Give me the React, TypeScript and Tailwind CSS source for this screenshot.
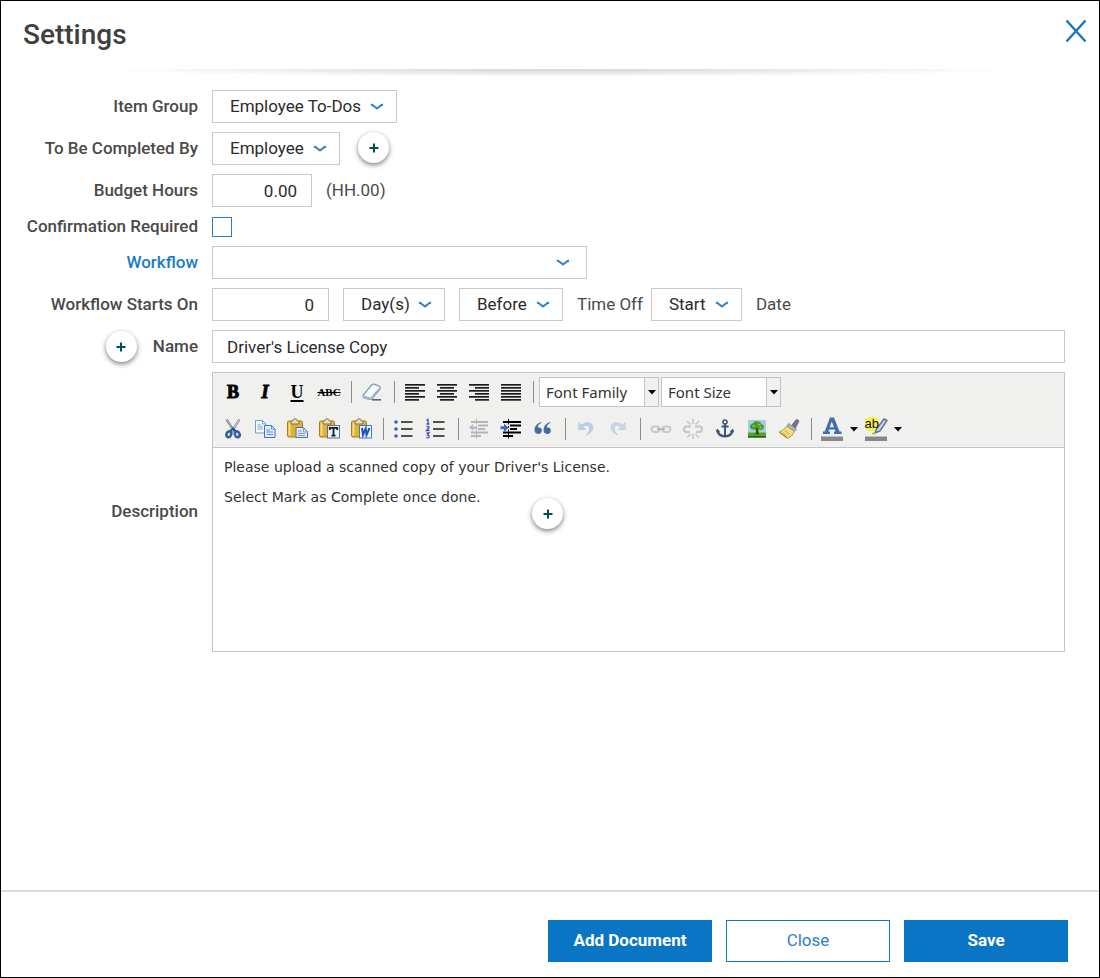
import { useState, type ReactNode } from "react";

const fieldBox =
  "h-[33px] border border-[#c9c9c9] bg-white text-[17px] text-[#2b2b2b] outline-none focus:border-[#0b75c5]";

function Chevron() {
  return (
    <svg viewBox="0 0 14 8" className="h-2 w-3.5" fill="none" stroke="#2f80c4" strokeWidth="2" aria-hidden="true">
      <path d="M1 1.500L2.800 2.200L7 5.500L11.200 2.200L13 1.500" strokeLinejoin="round" />
    </svg>
  );
}

function SelectBox({
  id,
  label,
  options,
  width,
  arrow = "right-[13px]",
}: {
  id: string;
  label?: string;
  options: string[];
  width: string;
  arrow?: string;
}) {
  return (
    <div className={`relative ${width}`}>
      <select id={id} aria-label={label} className={`${fieldBox} block w-full appearance-none pr-8 pl-[17px]`}>
        {options.map((option) => (
          <option key={option}>{option}</option>
        ))}
      </select>
      <span className={`pointer-events-none absolute inset-y-0 flex items-center ${arrow}`}>
        <Chevron />
      </span>
    </div>
  );
}

function Hotspot({ label, className = "" }: { label: string; className?: string }) {
  return (
    <button
      type="button"
      aria-label={label}
      className={`flex size-[31px] shrink-0 items-center justify-center rounded-full bg-white shadow-[0_2px_5px_rgba(0,0,0,0.5)] ${className}`}
    >
      <svg viewBox="0 0 10 10" className="size-2.5" stroke="#00504f" strokeWidth="2" aria-hidden="true">
        <path d="M5 0.500V9.500M0.500 5H9.500" />
      </svg>
    </button>
  );
}

function Row({
  id,
  label,
  children,
  height = "min-h-[33px]",
  accent = false,
  before,
}: {
  id: string;
  label: string;
  children: ReactNode;
  height?: string;
  accent?: boolean;
  before?: ReactNode;
}) {
  return (
    <div className={`flex items-center gap-3.5 ${height}`}>
      <div className="flex w-[197px] shrink-0 items-center justify-end gap-4">
        {before}
        <label
          htmlFor={id}
          className={`text-right text-[17px] font-medium ${accent ? "text-[#1a7cc9]" : "text-[#4a4a4a]"}`}
        >
          {label}
        </label>
      </div>
      <div className="flex min-w-0 flex-1 items-center">{children}</div>
    </div>
  );
}

function Icon({ children }: { children: ReactNode }) {
  return (
    <svg viewBox="0 0 22 22" className="size-[22px]" fill="none" aria-hidden="true">
      {children}
    </svg>
  );
}

function Tool({ label, children, disabled = false }: { label: string; children: ReactNode; disabled?: boolean }) {
  return (
    <button
      type="button"
      aria-label={label}
      title={label}
      disabled={disabled}
      className="flex h-7 w-8 shrink-0 items-center justify-center text-black enabled:hover:bg-[#dfe6ee]"
    >
      {children}
    </button>
  );
}

function Separator() {
  return (
    <span className="flex h-[22px] w-[11px] shrink-0 justify-end pr-1" aria-hidden="true">
      <span className="w-px bg-[#8c8c8c]" />
    </span>
  );
}

function Caret() {
  return (
    <svg viewBox="0 0 8 5" className="h-[5px] w-2" aria-hidden="true">
      <path d="M0 0H8L4 4.500Z" fill="#000" />
    </svg>
  );
}

function FontSelect({ label, width }: { label: string; width: string }) {
  return (
    <div className={`relative ${width}`}>
      <select
        aria-label={label}
        className="block h-[30px] w-full appearance-none border border-[#c4c4c4] bg-white pr-4 pl-1.5 font-['Noto_Sans',sans-serif] text-[15px] text-[#333] outline-none"
      >
        <option>{label}</option>
      </select>
      <span className="pointer-events-none absolute inset-y-px right-px flex w-3.5 items-center justify-center border-l border-[#c4c4c4] bg-[#f0f0ee]">
        <Caret />
      </span>
    </div>
  );
}

function AlignIcon({ rows }: { rows: [number, number][] }) {
  return (
    <Icon>
      {rows.map(([x, w], i) => (
        <rect key={i} x={x} y={3 + i * 3} width={w} height="1.700" fill="#1c1c1c" />
      ))}
    </Icon>
  );
}

function Clipboard({ children }: { children: ReactNode }) {
  return (
    <Icon>
      <rect x="1.500" y="3" width="15" height="16" rx="1.500" fill="#e3b030" stroke="#a87820" />
      <path d="M3.500 4.500V17.500" stroke="#f8de85" strokeWidth="2" />
      <path d="M5 6V4Q5 3 6.500 3Q7 0.800 9 0.800T11.500 3Q13 3 13 4V6Z" fill="#e9dfbb" stroke="#86703d" />
      {children}
    </Icon>
  );
}

const cut = (
  <Icon>
    <path d="M4 2L5.500 1.500L13 13L11.500 14Z" fill="#a7b0bb" stroke="#7b8794" strokeWidth=".8" />
    <path d="M18 2L16.500 1.500L9 13L10.500 14Z" fill="#cbd1d8" stroke="#7b8794" strokeWidth=".8" />
    <ellipse cx="6.800" cy="16.300" rx="2.300" ry="3" transform="rotate(25 6.800 16.300)" stroke="#35609f" strokeWidth="2.600" />
    <ellipse cx="15.200" cy="16.300" rx="2.300" ry="3" transform="rotate(-25 15.200 16.300)" stroke="#35609f" strokeWidth="2.600" />
    <path d="M8 13.500L11 10.500L14 13.500" stroke="#33558e" strokeWidth="2.200" />
  </Icon>
);

const copy = (
  <Icon>
    <path d="M1.500 2.500H8.500L12 6V15H1.500Z" fill="#f5f9ff" stroke="#7c9bd0" />
    <path d="M8.500 2.500V6H12M3.500 7H7M3.500 9H9M3.500 11H9" stroke="#7fa5e0" />
    <path d="M10.500 7.500H17.500L21 11V19.500H10.500Z" fill="#dfebff" stroke="#4472bd" />
    <path d="M17.500 7.500V11H21M12.500 12H16M12.500 14H19M12.500 16.500H19" stroke="#5f92df" />
  </Icon>
);

const paste = (
  <Clipboard>
    <path d="M10 9.500H17.500L21.500 14V19.500H10Z" fill="#dce8fa" stroke="#54729f" />
    <path d="M17.500 9.500V14H21.500M12 13H15.500M12 15.500H19M12 17.500H19" stroke="#7fa2d4" />
  </Clipboard>
);

const pasteText = (
  <Clipboard>
    <rect x="9.500" y="7.500" width="12" height="12.500" fill="#eef2f8" stroke="#5f7188" />
    <path d="M11.800 12V9.800H19.200V12M15.500 9.800V17.500M13.500 17.700H17.500" stroke="#151d2c" strokeWidth="1.800" />
  </Clipboard>
);

const pasteWord = (
  <Clipboard>
    <rect x="9.500" y="7.500" width="12" height="12.500" fill="#eaf2ff" stroke="#4c78bd" />
    <path d="M12 10L13 17L15.700 10.500L16.500 17L19.500 10" stroke="#1e57b0" strokeWidth="2" />
  </Clipboard>
);

const eraser = (
  <Icon>
    <path d="M2 14.500L10.500 4Q12 2.500 14 3.500L18 5Q20 6.500 18.500 8.500L11 17.500Q9.500 19 7.500 18L3 16.500Q1.500 15.800 2 14.500Z" fill="#f6f9fd" stroke="#8ba0b8" strokeWidth="1.400" />
    <path d="M2 14.500L9.500 17L18.500 7" stroke="#9db1c6" />
    <path d="M11 18.800H20" stroke="#4b5a6c" strokeWidth="1.500" />
  </Icon>
);

const bullets = (
  <Icon>
    <path d="M8 4H19.500M8 11H19.500M8 18H19.500" stroke="#1c1c1c" strokeWidth="1.700" />
    <g fill="#3e61b0">
      <circle cx="3" cy="4" r="1.800" />
      <circle cx="3" cy="11" r="1.800" />
      <circle cx="3" cy="18" r="1.800" />
    </g>
  </Icon>
);

const numbers = (
  <Icon>
    <path d="M8 4H19.500M8 11H19.500M8 18H19.500" stroke="#1c1c1c" strokeWidth="1.700" />
    <path
      d="M1.500 2.500L3 1.500V6M1.500 6H4.500M1.500 8.800Q4 7.500 4 9.500L1.500 12.500H4.500M1.500 15H4L2.500 17Q4.500 17 4 18.800Q3.500 20.500 1.300 19.500"
      stroke="#3e50b8"
      strokeWidth="1.300"
    />
  </Icon>
);

const outdent = (
  <Icon>
    <path d="M8.500 1V21" stroke="#b5b5b5" strokeDasharray="2 1.500" />
    <path d="M3 4H20M10 7.500H20M10 11H17M3 14.500H20M3 18H13" stroke="#b5b5b5" strokeWidth="1.800" />
    <path d="M1 9.500L5 6V8.500H9V11H5V13Z" fill="#b2bbd0" />
  </Icon>
);

const indent = (
  <Icon>
    <path d="M8.500 1V21" stroke="#000" strokeDasharray="2 1.500" />
    <path d="M3 4H21M10 7.500H21M10 11H17M3 14.500H21M3 18H13" stroke="#000" strokeWidth="2" />
    <path d="M8.500 9.800L4 5.500V8.300H0.500V11.300H4V14Z" fill="#3f68c6" />
  </Icon>
);

const quote = (
  <Icon>
    <path
      d="M9.500 5Q5.500 6.500 5.800 9.500Q9.800 8.800 9.800 12.700Q9.500 16 6 16Q2.500 15.500 2.500 11.500Q3 6 9 4ZM18.500 5Q14.500 6.500 14.800 9.500Q18.800 8.800 18.800 12.700Q18.500 16 15 16Q11.500 15.500 11.500 11.500Q12 6 18 4Z"
      fill="#466b9e"
    />
  </Icon>
);

const undo = (
  <Icon>
    <path d="M4 4.500L3.500 11.500H10.500L8 9.200Q12 5.500 14.500 9Q16 12.500 11.500 17Q18.500 14 18 8.500Q15.500 1.500 6.200 7Z" fill="#bfd0e4" stroke="#a9bfd8" strokeWidth=".6" />
  </Icon>
);

const redo = (
  <Icon>
    <path d="M18 4.500L18.500 11.500H11.500L14 9.200Q10 5.500 7.500 9Q6 12.500 10.500 17Q3.500 14 4 8.500Q6.500 1.500 15.800 7Z" fill="#c9d7e6" stroke="#b3c6d9" strokeWidth=".6" />
  </Icon>
);

const link = (
  <Icon>
    <rect x="1.500" y="8.500" width="8" height="5.500" rx="2.700" stroke="#c8c8c8" strokeWidth="1.800" />
    <rect x="12.500" y="8.500" width="8" height="5.500" rx="2.700" stroke="#c8c8c8" strokeWidth="1.800" />
    <path d="M7 11.200H15" stroke="#b8b8b8" strokeWidth="2" />
  </Icon>
);

const unlink = (
  <Icon>
    <path d="M9 8.500H4.500Q2 8.500 2 11.200T4.500 14H8M13 8.500H17.500Q20 8.500 20 11.200T17.500 14H14" stroke="#c6c6c6" strokeWidth="2" />
    <path d="M11 1V6M5 3L8.500 6.500M17 3L13.500 6.500M11 16V21M5 19.500L8.500 16M17 19.500L13.500 16" stroke="#c6c6c6" strokeWidth="1.500" />
  </Icon>
);

const anchor = (
  <Icon>
    <circle cx="11" cy="4" r="2" stroke="#3c5475" strokeWidth="1.600" />
    <path d="M11 6V19M7.500 8.500H14.500" stroke="#3c5475" strokeWidth="2" />
    <path d="M3.500 12.500Q4.500 18 11 18.500Q17.500 18 18.500 12.500" stroke="#3c5475" strokeWidth="2.200" />
    <path d="M1.800 14.500L3 10.500L6.300 13.500ZM20.200 14.500L19 10.500L15.700 13.500Z" fill="#3c5475" />
  </Icon>
);

const image = (
  <Icon>
    <rect x="2" y="2" width="18" height="17.500" fill="#a5cdea" />
    <rect x="2" y="14.500" width="18" height="5" fill="#54a32d" />
    <path d="M4 9Q3.500 6 7 5.500Q8 2.500 11.500 3.500Q15 3 15.500 6Q19 7 17.500 10.500Q16 13 13 11.500Q10 13.500 8 11.500Q4.500 12 4 9Z" fill="#4a9c28" />
    <path d="M10.500 10H12L13 16.500H9.500Z" fill="#3d4a16" />
    <path d="M6.500 8H9M12 6.500H14.500M13.500 9.500H15.500" stroke="#91c94a" strokeWidth="1.500" />
    <path d="M2 18.800H20" stroke="#295e17" strokeWidth="1.500" />
  </Icon>
);

const cleanup = (
  <Icon>
    <path d="M14 7L18 1.800Q20 1 21 3L17.500 10Z" fill="#776f9b" stroke="#565073" strokeWidth=".6" />
    <path d="M10.500 5.500L18.500 11L16.500 13.500L9 8Z" fill="#aab5c8" stroke="#6b7588" strokeWidth=".7" />
    <path d="M9 8L16.500 13.500Q14 19 9.500 20.500L1 14Q5.500 12.500 9 8Z" fill="#eedf7b" stroke="#a68d34" strokeWidth=".8" />
    <path d="M4 14.500L8.500 17.500M7 12.500L11.500 16" stroke="#c4ac48" />
    <path d="M1.500 14.500L9.500 20" stroke="#8f7628" />
  </Icon>
);

const textColor = (
  <svg viewBox="0 0 24 26" className="h-[26px] w-6" fill="none" aria-hidden="true">
    <path d="M10 1.500H14L19.500 15.500H21.500V18H14V15.500H15.500L14.800 13.500H8.900L8.200 15.500H10V18H3V15.500H4.800ZM11.800 5.500L9.700 11.200H14Z" fill="#416ca8" fillRule="evenodd" />
    <rect x="1" y="20.500" width="22" height="4.500" fill="#888" />
  </svg>
);

const highlight = (
  <svg viewBox="0 0 24 26" className="h-[26px] w-6" fill="none" aria-hidden="true">
    <rect x="1" y="1" width="14" height="14" rx="5" fill="#f4ef55" />
    <path d="M20 3L23 4.500L16 15L11 17L12.500 13Z" fill="#c7d5e8" stroke="#626d96" strokeWidth="1.400" />
    <path d="M8 17.500H12" stroke="#d4a321" strokeWidth="1.500" />
    <text x="0.500" y="12" fontSize="13" fontFamily="Liberation Sans, sans-serif" fill="#111">
      ab
    </text>
    <rect x="1" y="20.500" width="22" height="4.500" fill="#888" />
  </svg>
);

function Editor() {
  const [text, setText] = useState(
    "Please upload a scanned copy of your Driver's License.\n\nSelect Mark as Complete once done.",
  );
  return (
    <div className="relative flex min-w-0 flex-1 flex-col border border-[#c4c4c4] bg-white">
      <div className="flex flex-col gap-2 border-b border-[#c4c4c4] bg-[#f0f0ee] py-1 pl-1">
        <div className="flex flex-wrap items-center">
          <Tool label="Bold">
            <span className="font-['Liberation_Serif',serif] text-lg font-black [-webkit-text-stroke:1px_#000]">B</span>
          </Tool>
          <Tool label="Italic">
            <span className="font-['Liberation_Serif',serif] text-lg font-bold italic [-webkit-text-stroke:1px_#000]">I</span>
          </Tool>
          <Tool label="Underline">
            <span className="font-['Liberation_Serif',serif] text-lg font-bold underline decoration-2 underline-offset-2">U</span>
          </Tool>
          <Tool label="Strikethrough">
            <span className="font-['Liberation_Serif',serif] text-[11px] font-bold line-through">ABC</span>
          </Tool>
          <Separator />
          <Tool label="Remove formatting">{eraser}</Tool>
          <Separator />
          <Tool label="Align left">
            <AlignIcon rows={[[1, 20], [1, 14], [1, 20], [1, 14], [1, 20], [1, 14]]} />
          </Tool>
          <Tool label="Align center">
            <AlignIcon rows={[[1, 20], [4, 14], [1, 20], [4, 14], [1, 20], [4, 14]]} />
          </Tool>
          <Tool label="Align right">
            <AlignIcon rows={[[1, 20], [7, 14], [1, 20], [7, 14], [1, 20], [7, 14]]} />
          </Tool>
          <Tool label="Align full">
            <AlignIcon rows={[[1, 20], [1, 20], [1, 20], [1, 20], [1, 20], [1, 20]]} />
          </Tool>
          <Separator />
          <div className="flex gap-0.5 pl-px">
            <FontSelect label="Font Family" width="w-[120px]" />
            <FontSelect label="Font Size" width="w-[120px]" />
          </div>
        </div>
        <div className="flex flex-wrap items-center">
          <Tool label="Cut">{cut}</Tool>
          <Tool label="Copy">{copy}</Tool>
          <Tool label="Paste">{paste}</Tool>
          <Tool label="Paste as plain text">{pasteText}</Tool>
          <Tool label="Paste from Word">{pasteWord}</Tool>
          <Separator />
          <Tool label="Bulleted list">{bullets}</Tool>
          <Tool label="Numbered list">{numbers}</Tool>
          <Separator />
          <Tool label="Outdent" disabled>{outdent}</Tool>
          <Tool label="Indent">{indent}</Tool>
          <Tool label="Block quote">{quote}</Tool>
          <Separator />
          <Tool label="Undo" disabled>{undo}</Tool>
          <Tool label="Redo" disabled>{redo}</Tool>
          <Separator />
          <Tool label="Insert link" disabled>{link}</Tool>
          <Tool label="Unlink" disabled>{unlink}</Tool>
          <Tool label="Insert anchor">{anchor}</Tool>
          <Tool label="Insert image">{image}</Tool>
          <Tool label="Clean up code">{cleanup}</Tool>
          <Separator />
          <Tool label="Text color">{textColor}</Tool>
          <button type="button" aria-label="Choose text color" className="flex h-7 w-3 items-center justify-center">
            <Caret />
          </button>
          <Tool label="Highlight color">{highlight}</Tool>
          <button type="button" aria-label="Choose highlight color" className="flex h-7 w-3 items-center justify-center">
            <Caret />
          </button>
        </div>
      </div>
      <textarea
        id="description"
        value={text}
        onChange={(e) => setText(e.target.value)}
        className="block h-[203px] w-full resize-none px-[11px] pt-3 font-['DejaVu_Sans',sans-serif] text-[14px] leading-[15px] text-[#333] outline-none"
      />
      <Hotspot label="About the description" className="absolute top-[125px] left-[319px]" />
    </div>
  );
}

export default function App() {
  return (
    <div
      role="dialog"
      aria-labelledby="title"
      className="flex min-h-screen flex-col border border-black bg-white font-['Roboto',sans-serif] text-[17px] text-[#4a4a4a]"
    >
      <header className="flex h-[68px] items-center justify-between pr-3 pl-[22px]">
        <h1 id="title" className="text-[28px] font-medium text-[#404040]">
          Settings
        </h1>
        <button type="button" aria-label="Close settings" className="flex h-8 items-start">
          <svg viewBox="0 0 22 24" className="h-6 w-[22px]" stroke="#1276c0" strokeWidth="2.300" aria-hidden="true">
            <path d="M1.500 1.500L20.500 22.500M20.500 1.500L1.500 22.500" />
          </svg>
        </button>
      </header>
      <div className="mr-20 ml-[100px] h-2 bg-[radial-gradient(ellipse_50%_100%_at_top,#d4d4d4,transparent)]" />

      <form className="flex flex-1 flex-col" onSubmit={(e) => e.preventDefault()}>
        <div className="flex flex-1 flex-col gap-[9px] pt-[13px] pr-[34px] pb-6">
          <Row id="item-group" label="Item Group">
            <SelectBox id="item-group" width="w-[185px]" options={["Employee To-Dos"]} />
          </Row>
          <Row id="completed-by" label="To Be Completed By">
            <div className="flex gap-[18px]">
              <SelectBox id="completed-by" width="w-[128px]" options={["Employee"]} />
              <Hotspot label="About who completes the item" />
            </div>
          </Row>
          <Row id="budget-hours" label="Budget Hours">
            <input id="budget-hours" defaultValue="0.00" className={`${fieldBox} w-[100px] pr-3.5 text-right`} />
            <span className="ml-3.5">(HH.00)</span>
          </Row>
          <Row id="confirmation" label="Confirmation Required" height="h-[21px]">
            <input
              id="confirmation"
              type="checkbox"
              className="size-5 appearance-none border border-[#2f7dbb] bg-white checked:bg-[#0b75c5]"
            />
          </Row>
          <Row id="workflow" label="Workflow" accent>
            <SelectBox id="workflow" width="w-[375px]" arrow="right-[17px]" options={[""]} />
          </Row>
          <Row id="starts-on" label="Workflow Starts On">
            <div className="flex flex-wrap items-center gap-3.5">
              <input id="starts-on" defaultValue="0" className={`${fieldBox} w-[117px] pr-3.5 text-right`} />
              <SelectBox id="unit" label="Unit" width="w-[102px]" options={["Day(s)"]} />
              <SelectBox id="relation" label="Before or after" width="w-[104px]" options={["Before"]} />
              <span className="flex items-center gap-2">
                Time Off
                <SelectBox id="edge" label="Start or end" width="w-[91px]" options={["Start"]} />
              </span>
              <span>Date</span>
            </div>
          </Row>
          <Row id="name" label="Name" before={<Hotspot label="About the name" />}>
            <input id="name" defaultValue="Driver's License Copy" className={`${fieldBox} w-full px-3.5`} />
          </Row>
          <Row id="description" label="Description">
            <Editor />
          </Row>
        </div>

        <footer className="flex justify-end gap-3.5 border-t-2 border-[#dcdcdc] pt-7 pr-[31px] pb-[15px]">
          <button type="button" className="h-[42px] w-[164px] bg-[#0b75c5] font-bold text-white">
            Add Document
          </button>
          <button type="button" className="h-[42px] w-[164px] border border-[#1276c0] bg-white text-[#2f80c4]">
            Close
          </button>
          <button type="submit" className="h-[42px] w-[164px] bg-[#0b75c5] font-bold text-white">
            Save
          </button>
        </footer>
      </form>
    </div>
  );
}
